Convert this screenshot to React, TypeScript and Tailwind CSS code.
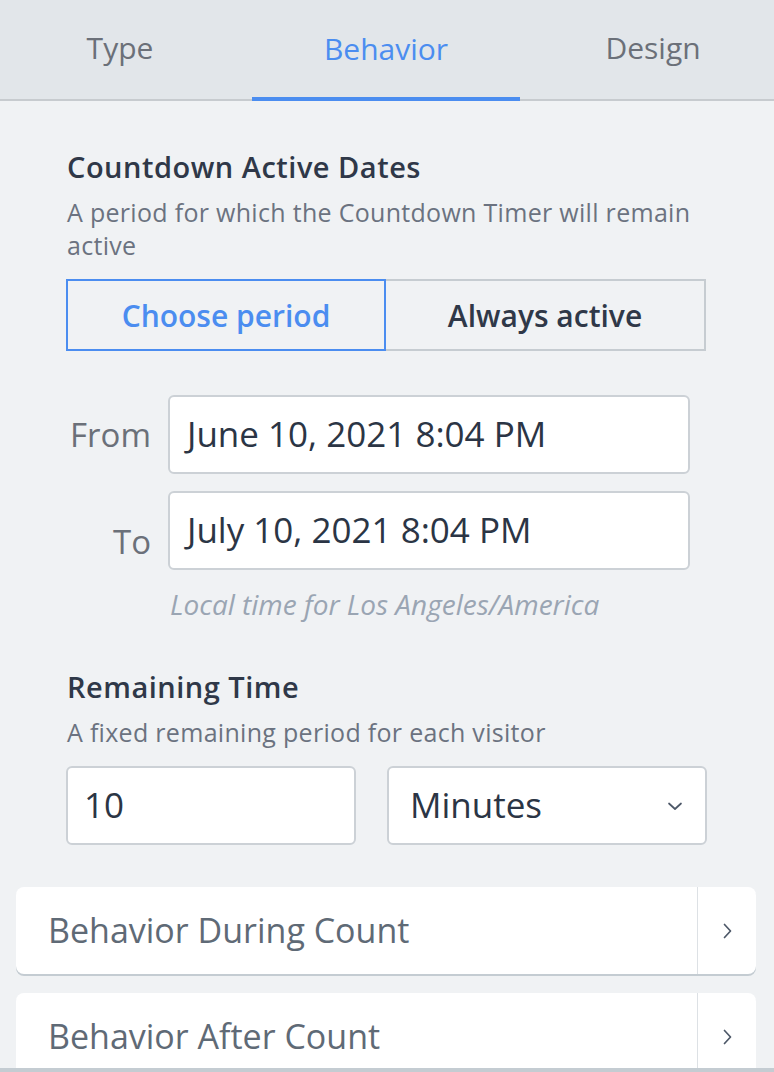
import React from "react";

const font = { fontFamily: "'Open Sans', 'Noto Sans', sans-serif" };

const Chevron = ({ dir }: { dir: "right" | "down" }) => (
  <svg width="20" height="20" viewBox="0 0 20 20" fill="none" className="text-[#4d5868]">
    {dir === "right" ? (
      <path d="M7.5 3.5 L13.5 10 L7.5 16.5" stroke="currentColor" strokeWidth="1.7" strokeLinecap="round" strokeLinejoin="round" />
    ) : (
      <path d="M4 7.5 L10 13 L16 7.5" stroke="currentColor" strokeWidth="1.7" strokeLinecap="round" strokeLinejoin="round" />
    )}
  </svg>
);

const Card = ({ title }: { title: string }) => (
  <div className="flex h-[87px] bg-white rounded-lg shadow-[0_2px_0_#c4ccd2]">
    <div className="flex-1 flex items-center pl-[32px] text-[34px] text-[#5f6a76]">{title}</div>
    <div className="w-[59px] border-l border-[#dde1e5] flex items-center justify-center">
      <Chevron dir="right" />
    </div>
  </div>
);

export default function App() {
  return (
    <div className="w-[774px] h-[1072px] overflow-hidden bg-[#f0f2f4] relative" style={font}>
      {/* tabs */}
      <div className="flex h-[101px] bg-[#e2e6ea] border-b-2 border-[#c7cbcf]">
        <div className="w-[252px] flex items-center justify-center text-[30px] text-[#6b7079] pb-[4px] pr-[12px]">Type</div>
        <div className="w-[268px] flex items-center justify-center text-[30px] text-[#4b8df0] border-b-4 border-[#4b8df0] mb-[-2px]">
          Behavior
        </div>
        <div className="flex-1 flex items-center justify-center text-[30px] text-[#6b7079] pb-[4px] pl-[12px]">Design</div>
      </div>

      <div className="pl-[67px] pr-[60px] pt-[49px]">
        <div className="text-[29px] font-semibold tracking-[0.5px] text-[#2f3848] leading-[34px]">Countdown Active Dates</div>
        <div className="mt-[12px] text-[25px] leading-[33px] tracking-[0.3px] text-[#6b7280]">
          A period for which the Countdown Timer will remain active
        </div>
        <div className="mt-[17px] flex h-[72px] w-[640px] -ml-px">
          <div className="w-[320px] border-2 border-[#4b8df0] flex items-center justify-center text-[30px] font-semibold text-[#4b8df0]">
            Choose period
          </div>
          <div className="w-[320px] border-2 border-l-0 border-[#c6ccd1] flex items-center justify-center text-[30px] font-semibold text-[#2f3848]">
            Always active
          </div>
        </div>

        <div className="mt-[44px] flex flex-col gap-[17px] -ml-[67px]">
          <div className="flex items-center">
            <div className="w-[151px] text-right text-[33px] text-[#6b7079]">From</div>
            <div className="ml-[17px] w-[522px] h-[79px] bg-white border-2 border-[#ccd1d6] rounded-md flex items-center pl-[17px] text-[35px] text-[#2b3545]">
              June 10, 2021 8:04 PM
            </div>
          </div>
          <div className="flex items-center">
            <div className="w-[151px] text-right text-[33px] text-[#6b7079] pt-[22px]">To</div>
            <div className="ml-[17px] w-[522px] h-[79px] bg-white border-2 border-[#ccd1d6] rounded-md flex items-center pl-[17px] text-[35px] text-[#2b3545]">
              July 10, 2021 8:04 PM
            </div>
          </div>
        </div>
        <div className="mt-[17px] ml-[103px] text-[28px] leading-[34px] italic text-[#9aa5b3]">Local time for Los Angeles/America</div>

        <div className="mt-[49px] text-[29px] font-semibold tracking-[0.5px] text-[#2f3848] leading-[34px]">Remaining Time</div>
        <div className="mt-[11px] text-[25px] leading-[34px] tracking-[0.3px] text-[#6b7280]">A fixed remaining period for each visitor</div>
        <div className="mt-[17px] flex gap-[31px] -ml-px">
          <div className="w-[290px] h-[79px] bg-white border-2 border-[#ccd1d6] rounded-md flex items-center pl-[16px] text-[35px] text-[#2b3545]">
            10
          </div>
          <div className="w-[320px] h-[79px] bg-white border-2 border-[#ccd1d6] rounded-md flex items-center justify-between pl-[21px] pr-[20px] text-[35px] text-[#2b3545]">
            <span>Minutes</span>
            <Chevron dir="down" />
          </div>
        </div>
      </div>

      <div className="pl-[16px] pr-[18px] mt-[42px] flex flex-col gap-[19px]">
        <Card title="Behavior During Count" />
        <Card title="Behavior After Count" />
      </div>
      <div className="absolute left-0 right-0 bottom-0 h-[4px] bg-[#c4ccd2]" />
    </div>
  );
}
